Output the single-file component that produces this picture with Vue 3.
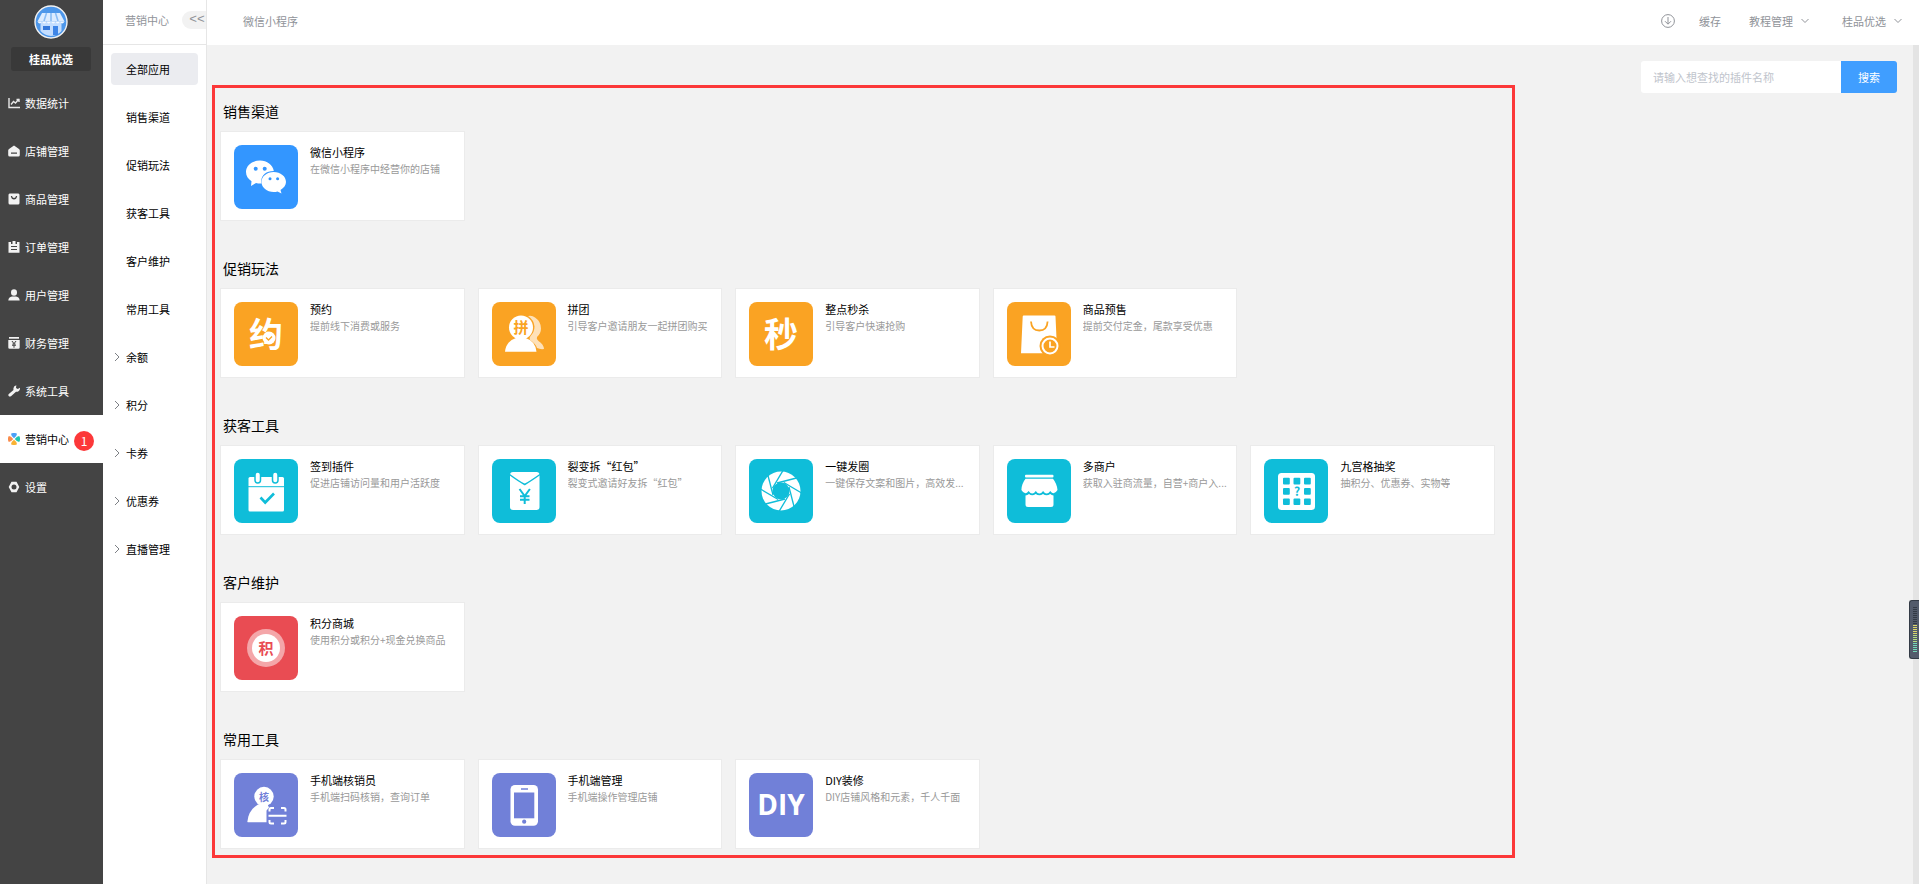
<script setup>
import { ref } from 'vue'

const keyword = ref('')

const mainNav = [
  { name: '数据统计', icon: 'chart' },
  { name: '店铺管理', icon: 'shop' },
  { name: '商品管理', icon: 'goods' },
  { name: '订单管理', icon: 'order' },
  { name: '用户管理', icon: 'user' },
  { name: '财务管理', icon: 'finance' },
  { name: '系统工具', icon: 'wrench' },
  { name: '营销中心', icon: 'market', active: true, badge: 1 },
  { name: '设置', icon: 'setting' },
]

const subNav = [
  { name: '全部应用', active: true },
  { name: '销售渠道' },
  { name: '促销玩法' },
  { name: '获客工具' },
  { name: '客户维护' },
  { name: '常用工具' },
  { name: '余额', group: true },
  { name: '积分', group: true },
  { name: '卡券', group: true },
  { name: '优惠券', group: true },
  { name: '直播管理', group: true },
]

const sections = [
  {
    title: '销售渠道',
    tone: 'blue',
    apps: [{ icon: 'wechat', name: '微信小程序', desc: '在微信小程序中经营你的店铺' }],
  },
  {
    title: '促销玩法',
    tone: 'orange',
    apps: [
      { icon: 'booking', name: '预约', desc: '提前线下消费或服务' },
      { icon: 'group', name: '拼团', desc: '引导客户邀请朋友一起拼团购买' },
      { icon: 'flash', name: '整点秒杀', desc: '引导客户快速抢购' },
      { icon: 'presale', name: '商品预售', desc: '提前交付定金，尾款享受优惠' },
    ],
  },
  {
    title: '获客工具',
    tone: 'teal',
    apps: [
      { icon: 'checkin', name: '签到插件', desc: '促进店铺访问量和用户活跃度' },
      { icon: 'redpacket', name: '裂变拆“红包”', desc: '裂变式邀请好友拆“红包”' },
      { icon: 'aperture', name: '一键发圈', desc: '一键保存文案和图片，高效发...' },
      { icon: 'merchants', name: '多商户', desc: '获取入驻商流量，自营+商户入...' },
      { icon: 'lottery', name: '九宫格抽奖', desc: '抽积分、优惠券、实物等' },
    ],
  },
  {
    title: '客户维护',
    tone: 'red',
    apps: [{ icon: 'points', name: '积分商城', desc: '使用积分或积分+现金兑换商品' }],
  },
  {
    title: '常用工具',
    tone: 'purple',
    apps: [
      { icon: 'verify', name: '手机端核销员', desc: '手机端扫码核销，查询订单' },
      { icon: 'phone', name: '手机端管理', desc: '手机端操作管理店铺' },
      { icon: 'diy', name: 'DIY装修', desc: 'DIY店铺风格和元素，千人千面' },
    ],
  },
]

const blades = [0, 45, 90, 135, 180, 225, 270, 315]
</script>

<template>
  <div class="layout">
    <aside class="sidebar">
      <svg class="logo" viewBox="0 0 34 34" aria-hidden="true">
        <circle cx="17" cy="17" r="16" fill="#4d97ea" stroke="#f2f2f2" stroke-width="1.4" />
        <path d="M8 8h18l4.500 8.500H3.500z" fill="#dcecff" />
        <path d="M12.500 8l-2.500 8M17 8v8M21.500 8l2.500 8" stroke="#8abdf6" stroke-width="1.600" />
        <path d="M6.500 17h21v9q-4 4.500-10.500 5q-6.500-.5-10.500-5z" fill="#c4deff" />
        <path d="M3.500 16.500q2.200 4 4.500 0q2.200 4 4.500 0q2.200 4 4.500 0q2.200 4 4.500 0q2.200 4 4.500 0q2.200 4 4.500 0z" fill="#f4f9ff" />
        <rect x="9" y="21" width="7" height="4" fill="#3579dc" />
        <rect x="19" y="21" width="5" height="9" fill="#3f86e8" />
      </svg>
      <div class="shop-name">桂品优选</div>
      <nav class="main-nav">
        <a v-for="item in mainNav" :key="item.name" href="#" class="main-link" :class="{ active: item.active }">
          <svg class="nav-icon" viewBox="0 0 12 12" fill="#f2f2f2" aria-hidden="true">
            <g v-if="item.icon === 'chart'" fill="none" stroke="#e8e8e8" stroke-width="1.400">
              <path d="M1 1v9.500h11" />
              <path d="M3 7.500l2.500-3 2 1.500 3.500-4M8.500 2.500h2.500v2.500" />
            </g>
            <path v-else-if="item.icon === 'shop'" fill-rule="evenodd" d="M6 .5L11 4Q11.800 4.500 11.800 5.500V10q0 1.500-1.500 1.500H1.700Q.2 11.500.2 10V5.500Q.2 4.500 1 4zM3 7.500v1.300h6V7.500z" />
            <path v-else-if="item.icon === 'goods'" fill-rule="evenodd" d="M1.500.5h9l1 1V10q0 1.500-1.500 1.500H2Q.5 11.500.5 10V1.500zM2.800 3Q3.500 6.500 6 6.500T9.200 3H8Q7.500 5 6 5T4 3z" />
            <path v-else-if="item.icon === 'order'" fill-rule="evenodd" d="M.5 1H3v2h1.500V0h3v3H9V1h2.500v10.800H.5zM3 5v1h6V5zM3 8v1h6V8z" />
            <g v-else-if="item.icon === 'user'">
              <ellipse cx="6" cy="3.500" rx="3" ry="3.300" />
              <path d="M.3 11.500Q.5 8 4 7.500h4q3.500.5 3.700 4z" />
            </g>
            <g v-else-if="item.icon === 'finance'">
              <rect x="1" y="0" width="10" height="1.700" />
              <path fill-rule="evenodd" d="M.3 3h11.400v7.500q0 1.300-1.300 1.300H1.600Q.3 11.800.3 10.500zM3.500 4l2 2.700H4v.8h1.500v.7H4V9h1.500v1.700h1V9H8v-.8H6.500v-.7H8v-.8H6.500l2-2.700H7.400L6 5.900 4.600 4z" />
            </g>
            <path v-else-if="item.icon === 'wrench'" d="M.8 9L5.500 5Q4.700 1.500 8.300.3L8 3l1.800 1L12 2.700Q12.300 6.800 8 6.800L3 11.200Q1.500 12 .7 11T.8 9z" />
            <g v-else-if="item.icon === 'market'">
              <path d="M3 .8Q6-1 9 .8Q9 3 6 5.200Q3 3 3 .8z" fill="#4aa0f8" />
              <path d="M11.200 3Q13 6 11.200 9Q9 9 6.800 6Q9 3 11.200 3z" fill="#20c5b0" />
              <path d="M3 11.200Q6 13 9 11.200Q9 9 6 6.800Q3 9 3 11.200z" fill="#f9b233" />
              <path d="M.8 3Q-1 6 .8 9Q3 9 5.200 6Q3 3 .8 3z" fill="#f98b4b" />
            </g>
            <path v-else fill-rule="evenodd" d="M3.500.8h5L11.300 6l-2.800 5.200h-5L.7 6zM6 3.500a2.500 2.500 0 100 5a2.500 2.500 0 100-5z" />
          </svg>
          <span>{{ item.name }}</span>
          <span v-if="item.badge" class="badge">{{ item.badge }}</span>
        </a>
      </nav>
    </aside>

    <aside class="subbar">
      <div class="sub-head">
        <span>营销中心</span>
        <button type="button" class="collapse" aria-label="收起">&lt;&lt;</button>
      </div>
      <nav class="sub-nav">
        <a v-for="item in subNav" :key="item.name" href="#" class="sub-link" :class="{ active: item.active }">
          <svg v-if="item.group" class="caret" viewBox="0 0 6 10" aria-hidden="true">
            <path d="M1 1l4 4-4 4" fill="none" stroke="#7d8085" />
          </svg>
          <span>{{ item.name }}</span>
        </a>
      </nav>
    </aside>

    <div class="page">
      <header class="topbar">
        <span class="crumb">微信小程序</span>
        <div class="tools">
          <button type="button" class="tool" aria-label="下载">
            <svg class="download" viewBox="0 0 14 14" fill="none" stroke="#909399" aria-hidden="true">
              <circle cx="7" cy="7" r="6.400" />
              <path d="M7 3v7M4 7.200L7 10.200l3-3" />
            </svg>
          </button>
          <button type="button" class="tool">缓存</button>
          <button type="button" class="tool">
            教程管理
            <svg class="arrow" viewBox="0 0 8 6" aria-hidden="true"><path d="M.5 1L4 4.500 7.500 1" fill="none" stroke="#909399" /></svg>
          </button>
          <button type="button" class="tool last">
            桂品优选
            <svg class="arrow" viewBox="0 0 8 6" aria-hidden="true"><path d="M.5 1L4 4.500 7.500 1" fill="none" stroke="#909399" /></svg>
          </button>
        </div>
      </header>

      <div class="body">
        <main class="panel">
          <section v-for="section in sections" :key="section.title" class="section">
            <h2>{{ section.title }}</h2>
            <div class="cards">
              <a v-for="app in section.apps" :key="app.name" href="#" class="card">
                <svg class="tile" :class="section.tone" viewBox="0 0 64 64" fill="#fff" aria-hidden="true">
                  <g v-if="app.icon === 'wechat'">
                    <path d="M26 15.500c-7.800 0-14 5-14 11.500 0 3.800 2 7 5.500 9.200L17 41l5-3q2 .5 4.500.5h1C26 31 32 25.800 39.800 26c-1-6-6.800-10.500-13.800-10.500z" />
                    <path d="M39.700 27c-6.800 0-12.200 4.400-12.200 10s5.400 10 12.200 10q2 0 3.800-.5l4 2-1-3.500c3.300-2 5.500-4.800 5.500-8 0-5.600-5.500-10-12.300-10z" />
                    <g fill="#3396ff">
                      <circle cx="21.700" cy="23.700" r="2" /><circle cx="30.700" cy="23.700" r="2" />
                      <circle cx="36" cy="33.700" r="1.500" /><circle cx="43.600" cy="33.700" r="1.500" />
                    </g>
                  </g>
                  <g v-else-if="app.icon === 'booking'">
                    <text x="32" y="45" class="glyph g34">约</text>
                    <circle cx="35" cy="36" r="6.500" />
                    <path d="M30 42l1-4 5 4z" />
                    <path d="M32 35.500l2.500 2.500 3.500-3.500" fill="none" stroke="#faa323" stroke-width="1.300" />
                  </g>
                  <g v-else-if="app.icon === 'group'">
                    <path d="M36 14q4-1 7 1.500 6 4 6 11 0 5-4 8.500-1 2 1.500 4 5 3 5.500 8-4 .5-7-1-1-4-7-8-1-2 .5-4 4-4 4-9.500Q42 18 36 14z" opacity=".68" />
                    <circle cx="29" cy="25.500" r="12" />
                    <path d="M13 49.800Q14 39 24 36h9.500Q43.500 39 44.500 49.800z" />
                    <text x="29" y="31" class="glyph g15 orange-ink">拼</text>
                  </g>
                  <text v-else-if="app.icon === 'flash'" x="32" y="45" class="glyph g34">秒</text>
                  <g v-else-if="app.icon === 'presale'">
                    <path d="M17.500 13.500h30q1 0 1 1l1.700 36.700H14l1.700-36.700q0-1 1-1z" />
                    <path d="M24 19.500Q24.500 28.500 32.300 28.500T40.600 19.500" fill="none" stroke="#faa323" stroke-width="1.800" />
                    <circle cx="43" cy="44" r="10.500" fill="#faa323" />
                    <circle cx="43" cy="44" r="7.500" fill="none" stroke="#fff" stroke-width="2" />
                    <path d="M43 39.500V45h4.500" fill="none" stroke="#fff" stroke-width="1.700" />
                  </g>
                  <g v-else-if="app.icon === 'checkin'">
                    <rect x="14.500" y="18" width="35.500" height="34.500" rx="1.500" />
                    <path d="M14 27.700h37" stroke="#0fbdd9" stroke-width="1" />
                    <rect x="21" y="13" width="5.500" height="11" rx="2.700" stroke="#0fbdd9" stroke-width="1.500" />
                    <rect x="38.500" y="13" width="5.500" height="11" rx="2.700" stroke="#0fbdd9" stroke-width="1.500" />
                    <path d="M26.500 38.500l4.700 5L40 34.500" fill="none" stroke="#0fbdd9" stroke-width="2.600" />
                  </g>
                  <g v-else-if="app.icon === 'redpacket'">
                    <rect x="18" y="13" width="29.500" height="38" rx="3" />
                    <path d="M17.500 15.500Q27 22.500 32.700 25.500 38 22.500 48 15.500" fill="none" stroke="#0fbdd9" stroke-width="1.500" />
                    <path d="M27.500 30l5.200 7 5.200-7M28 37.300h9.500M28 40.800h9.500M32.700 37v8" fill="none" stroke="#0fbdd9" stroke-width="2" />
                  </g>
                  <g v-else-if="app.icon === 'aperture'">
                    <circle cx="32" cy="32" r="19.500" />
                    <circle cx="32" cy="32" r="8.500" fill="#0fbdd9" />
                    <path v-for="deg in blades" :key="deg" d="M28 24L47.500 19" :transform="`rotate(${deg} 32 32)`" stroke="#0fbdd9" stroke-width="1.300" />
                  </g>
                  <g v-else-if="app.icon === 'merchants'">
                    <rect x="18" y="15.700" width="28.500" height="2.800" rx="1" />
                    <path d="M18.500 19.800H46Q50 25 50.500 31q-3.600 6-7.200 1q-3.600 5-7.200 0q-3.700 5-7.300 0q-3.600 5-7.200 0q-3.600 5-7.200-1Q14.500 25 18.500 19.800z" />
                    <path d="M18.500 36.500q2-.2 3.500-1.500q3 2.500 6.700 0q3.700 2.500 7.300 0q3.600 2.500 7.200 0q1.500 1.300 3.300 1.500v9q0 2.500-2.500 2.500H21q-2.500 0-2.500-2.500z" />
                  </g>
                  <g v-else-if="app.icon === 'lottery'">
                    <rect x="14" y="14" width="37" height="37" rx="3.500" />
                    <g fill="#0fbdd9">
                      <template v-for="row in 3" :key="row">
                        <template v-for="col in 3" :key="col">
                          <rect v-if="row !== 2 || col !== 2" :x="8.500 + col * 10.500" :y="8.500 + row * 10.300" width="6.800" height="6.600" rx="1" />
                        </template>
                      </template>
                      <text x="33" y="36.500" class="glyph g12 teal-ink">?</text>
                    </g>
                  </g>
                  <g v-else-if="app.icon === 'points'">
                    <circle cx="32" cy="32" r="19" opacity=".5" />
                    <circle cx="32" cy="32" r="14" />
                    <text x="32" y="37.500" class="glyph g15 red-ink">积</text>
                  </g>
                  <g v-else-if="app.icon === 'verify'">
                    <circle cx="30" cy="23.500" r="9.700" />
                    <path d="M13.300 49Q14.500 37 24 31.500h10V49.200H14z" />
                    <path d="M32.500 33.500h21v19h-21z" fill="#7180d8" />
                    <path d="M35.500 38.500v-2q0-1.500 1.500-1.500h3M47 35h3q1.500 0 1.500 1.500v2M35.500 47v2q0 1.500 1.500 1.500h3M47 50.500h3q1.500 0 1.500-1.500v-2M34.500 42.700h18" fill="none" stroke="#fff" stroke-width="2" />
                    <path d="M24 31.500h9.500l1.500 3-2.500 3z" />
                    <text x="30" y="27.500" class="glyph g10 purple-ink">核</text>
                  </g>
                  <g v-else-if="app.icon === 'phone'">
                    <rect x="18.500" y="12" width="27.500" height="40.800" rx="4.500" />
                    <rect x="22" y="19.500" width="20.300" height="25.800" fill="#7180d8" />
                    <path d="M29 16h7" stroke="#7180d8" stroke-width="1.400" />
                    <circle cx="32.200" cy="48.700" r="2.100" fill="#7180d8" />
                  </g>
                  <text v-else x="32" y="41.500" class="glyph g28">DIY</text>
                </svg>
                <div class="info">
                  <h3>{{ app.name }}</h3>
                  <p>{{ app.desc }}</p>
                </div>
              </a>
            </div>
          </section>
        </main>

        <form class="search" @submit.prevent>
          <input v-model="keyword" type="text" aria-label="插件名称" placeholder="请输入想查找的插件名称" />
          <button type="submit">搜索</button>
        </form>
        <div class="track"></div>
      </div>
    </div>

    <div class="meter" aria-hidden="true">
      <i v-for="n in 23" :key="n" :class="{ yellow: n > 9 && n < 15, lime: n > 14 && n < 19, aqua: n > 18 }"></i>
    </div>
  </div>
</template>

<style>
body {
  margin: 0;
}
</style>

<style scoped>
.layout {
  display: flex;
  min-height: 100vh;
  background: #f2f2f2;
  color: #000;
  font-family: "Noto Sans CJK SC", "Liberation Sans", sans-serif;
  font-size: 11px;
  line-height: 16px;
}
a {
  color: inherit;
  text-decoration: none;
}
button,
input {
  border: 0;
  padding: 0;
  margin: 0;
  font: inherit;
  background: none;
}
h2,
h3,
p {
  margin: 0;
  font-weight: 400;
}
.sidebar {
  flex: none;
  width: 103px;
  background: #444;
  color: #fff;
}
.logo {
  display: block;
  width: 34px;
  height: 34px;
  margin: 5px auto 8px 34px;
}
.shop-name {
  margin: 0 12px 8px 11px;
  border-radius: 3px;
  background: #393939;
  line-height: 24px;
  text-align: center;
  font-weight: 700;
}
.main-link {
  display: flex;
  align-items: center;
  height: 48px;
  padding-left: 8px;
}
.main-link.active {
  background: #fff;
  color: #000;
}
.nav-icon {
  width: 12px;
  height: 12px;
  margin-right: 5px;
}
.badge {
  width: 20px;
  margin: 4px 0 0 5px;
  border-radius: 10px;
  background: #fc3839;
  color: #fff;
  line-height: 20px;
  font-size: 12px;
  text-align: center;
}
.subbar {
  flex: none;
  box-sizing: border-box;
  width: 104px;
  border-right: 1px solid #e6e6e6;
  background: #fff;
}
.sub-head {
  display: flex;
  align-items: center;
  justify-content: space-between;
  box-sizing: border-box;
  height: 45px;
  padding: 0 0 4px 22px;
  border-bottom: 1px solid #e6e6e6;
  color: #909399;
}
.collapse {
  width: 24px;
  height: 18px;
  border-radius: 9px 0 0 9px;
  background: #f2f2f2;
  color: #909399;
  font-family: "Liberation Mono", monospace;
  font-size: 13px;
  line-height: 18px;
  padding-left: 6px;
}
.sub-nav {
  display: flex;
  flex-direction: column;
  gap: 16px;
  padding: 8px;
}
.sub-link {
  display: flex;
  align-items: center;
  position: relative;
  height: 32px;
  padding-left: 15px;
  border-radius: 4px;
}
.sub-link.active {
  background: #ebecf0;
}
.caret {
  position: absolute;
  left: 3px;
  width: 6px;
  height: 10px;
}
.page {
  display: flex;
  flex: 1;
  flex-direction: column;
  min-width: 0;
}
.topbar {
  display: flex;
  align-items: center;
  justify-content: space-between;
  box-sizing: border-box;
  height: 45px;
  padding: 0 17px 4px 36px;
  background: #fff;
  color: #909399;
}
.tools {
  display: flex;
  align-items: center;
  gap: 28px;
}
.tool {
  display: flex;
  align-items: center;
  gap: 8px;
  color: #909399;
}
.tool:first-child {
  margin-right: -4px;
}
.tool.last {
  margin-left: 5px;
}
.download {
  width: 14px;
  height: 14px;
}
.arrow {
  width: 8px;
  height: 6px;
}
.body {
  display: flex;
  flex: 1;
  align-items: flex-start;
}
.panel {
  flex: 1;
  min-width: 0;
  margin: 40px 126px 26px 5px;
  padding: 13px 17px 6px 5px;
  border: 3px solid #fc3839;
}
.section + .section {
  margin-top: 37px;
}
h2 {
  padding-left: 3px;
  margin-bottom: 10px;
  font-size: 14px;
  line-height: 20px;
}
.cards {
  display: grid;
  grid-template-columns: repeat(5, minmax(0, 1fr));
  gap: 13px;
}
.card {
  display: flex;
  gap: 12px;
  box-sizing: border-box;
  min-height: 90px;
  padding: 13px 8px 10px 13px;
  border: 1px solid #ebebeb;
  background: #fff;
}
.tile {
  flex: none;
  width: 64px;
  height: 64px;
  border-radius: 8px;
}
.blue {
  background: #3396ff;
}
.orange {
  background: #faa323;
}
.teal {
  background: #0fbdd9;
}
.red {
  background: #e94c53;
}
.purple {
  background: #7180d8;
}
.glyph {
  font-weight: 700;
  text-anchor: middle;
}
.g34 {
  font-size: 34px;
}
.g28 {
  font-family: "Open Sans", "Noto Sans", sans-serif;
  font-size: 28px;
}
.g15 {
  font-size: 15px;
}
.g12 {
  font-size: 12px;
}
.g10 {
  font-size: 10px;
}
.orange-ink {
  fill: #faa323;
}
.teal-ink {
  fill: #0fbdd9;
}
.red-ink {
  fill: #e94c53;
}
.purple-ink {
  fill: #7180d8;
}
.info {
  min-width: 0;
}
h3 {
  margin-bottom: 2px;
  font-size: 11px;
  line-height: 14px;
}
p {
  overflow: hidden;
  color: #999;
  font-size: 10px;
  line-height: 16px;
  white-space: nowrap;
}
.search {
  display: flex;
  flex: none;
  margin: 16px 16px 0 0;
}
.search input {
  box-sizing: border-box;
  width: 200px;
  height: 32px;
  padding: 0 12px;
  border-radius: 3px 0 0 3px;
  background: #fff;
}
.search input::placeholder {
  color: #c0c4cc;
  opacity: 1;
}
.search button {
  width: 56px;
  border-radius: 0 3px 3px 0;
  background: #409eff;
  color: #fff;
}
.track {
  flex: none;
  align-self: stretch;
  width: 6px;
  background: #e4e4e4;
}
.meter {
  position: fixed;
  top: 600px;
  right: 0;
  display: grid;
  align-content: space-between;
  box-sizing: border-box;
  width: 10px;
  height: 59px;
  padding: 6px 2px 6px 3px;
  border: 1px solid #333a45;
  border-right: 0;
  border-radius: 3px 0 0 3px;
  background: #535b6b;
}
.meter i {
  height: 1px;
  background: #333a45;
}
.meter .yellow {
  background: #dcd66a;
}
.meter .lime {
  background: #b4dc80;
}
.meter .aqua {
  background: #74d8b8;
}
</style>
